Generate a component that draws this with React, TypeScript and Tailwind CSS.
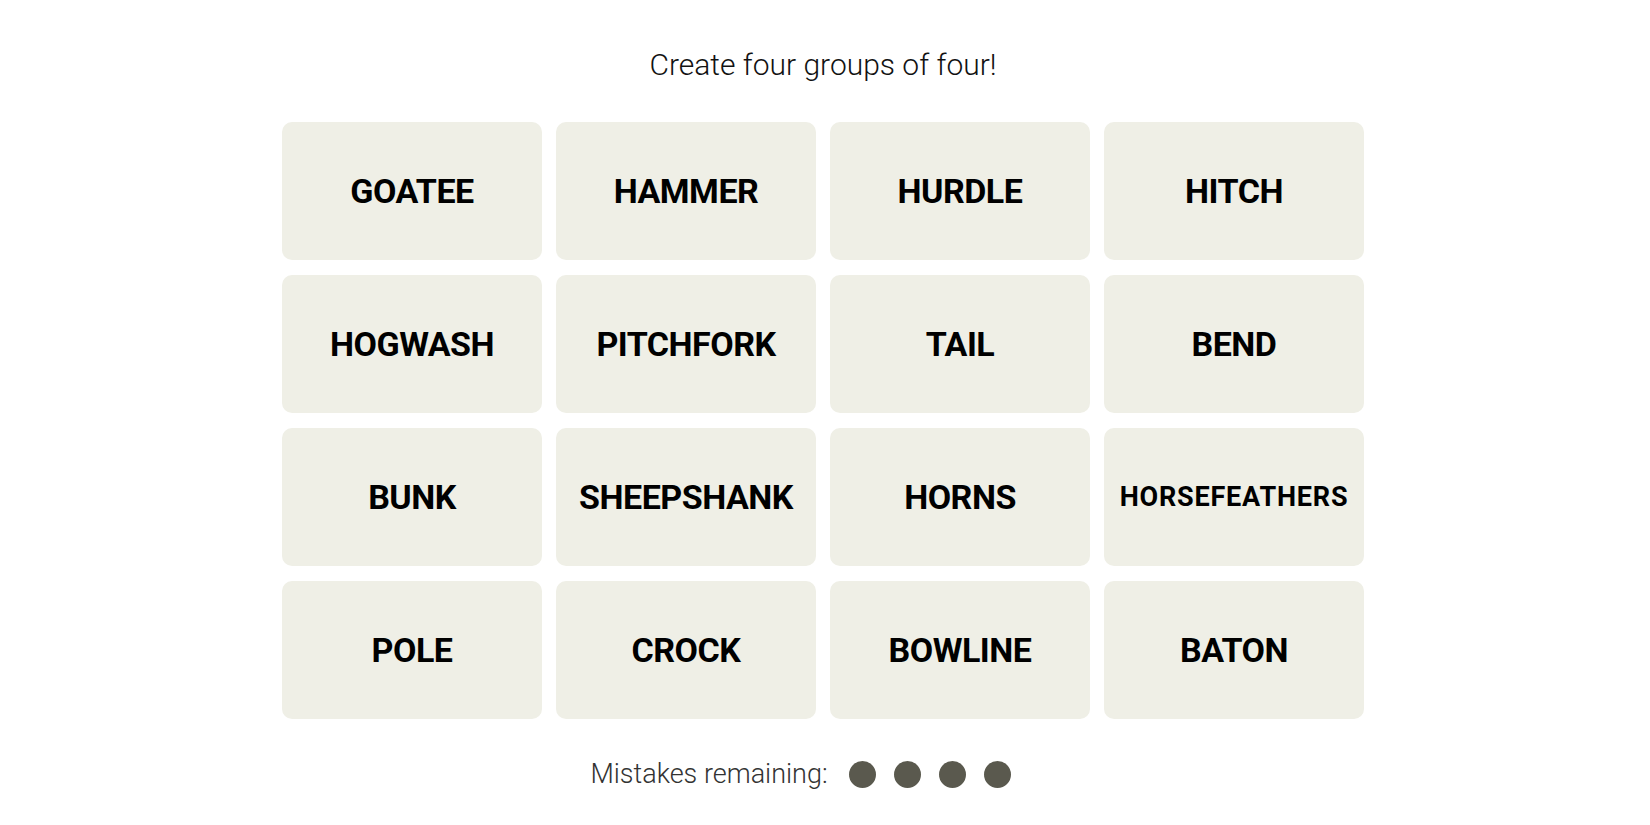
import React from "react";

const words = [
  "GOATEE",
  "HAMMER",
  "HURDLE",
  "HITCH",
  "HOGWASH",
  "PITCHFORK",
  "TAIL",
  "BEND",
  "BUNK",
  "SHEEPSHANK",
  "HORNS",
  "HORSEFEATHERS",
  "POLE",
  "CROCK",
  "BOWLINE",
  "BATON",
];

const Tile = ({ word }: { word: string }) => {
  const long = word.length > 11;
  return (
    <div className="h-[138px] rounded-[10px] bg-[#efefe6] flex items-center justify-center">
      <span
        className={
          long
            ? "text-[27px] font-bold tracking-[0.8px] text-black"
            : "text-[34px] font-bold tracking-[-0.5px] text-black"
        }
      >
        {word}
      </span>
    </div>
  );
};

export default function App() {
  return (
    <div className="min-h-screen bg-white flex flex-col items-center pr-[4px] font-['Roboto',_'Liberation_Sans',_sans-serif]">
      <p className="mt-[46px] text-[30px] leading-[38px] font-light text-[#121212]">
        Create four groups of four!
      </p>
      <div className="mt-[38px] grid grid-cols-[repeat(4,260px)] gap-x-[14px] gap-y-[15px]">
        {words.map((w) => (
          <Tile key={w} word={w} />
        ))}
      </div>
      <div className="mt-[40px] flex items-center pr-[45px]">
        <span className="text-[27px] leading-[31px] font-light text-[#333]">
          Mistakes remaining:
        </span>
        <div className="ml-[21px] flex gap-[18px]">
          {[0, 1, 2, 3].map((i) => (
            <span key={i} className="w-[27px] h-[27px] rounded-full bg-[#5a594e]" />
          ))}
        </div>
      </div>
    </div>
  );
}
